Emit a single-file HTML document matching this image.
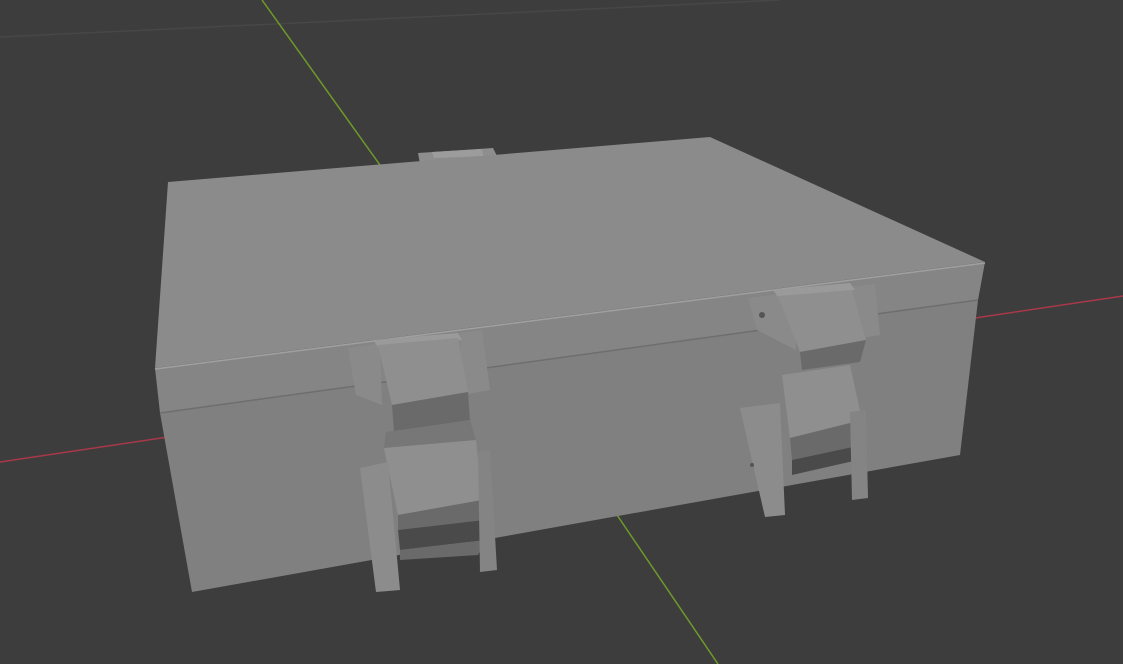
<!DOCTYPE html>
<html><head><meta charset="utf-8"><style>html,body{margin:0;padding:0;background:#3d3d3d;overflow:hidden}svg{display:block}</style></head>
<body>
<svg width="1123" height="664" viewBox="0 0 1123 664" xmlns="http://www.w3.org/2000/svg">
<rect width="1123" height="664" fill="#3d3d3d"/>
<line x1="0" y1="37" x2="780" y2="0" stroke="#474747" stroke-width="1.5"/>
<line x1="262" y1="0" x2="380" y2="165" stroke="#6f9a2a" stroke-width="1.5"/>
<line x1="617" y1="515" x2="718" y2="664" stroke="#6f9a2a" stroke-width="1.5"/>
<line x1="0" y1="462" x2="168" y2="437" stroke="#a8384a" stroke-width="1.5"/>
<line x1="975" y1="318" x2="1123" y2="296" stroke="#a8384a" stroke-width="1.5"/>
<polygon points="418,153 493,148 498,158 420,164" fill="#8e8e8e"/>
<polygon points="432,152 482,149 483,156 434,158" fill="#9c9c9c"/>
<polygon points="160,413 978,300 960,455 192,592" fill="#808080"/>
<polygon points="155,368 985,262 978,300 160,413" fill="#858585"/>
<line x1="160" y1="413" x2="978" y2="300" stroke="#6e6e6e" stroke-width="1.5"/>
<line x1="155" y1="369" x2="985" y2="263" stroke="#a0a0a0" stroke-width="1.5"/>
<polygon points="168,182 710,137 985,262 155,368" fill="#8b8b8b"/>
<!-- left latch -->
<polygon points="348,348 380,343 382,405 356,395" fill="#8a8a8a"/>
<polygon points="460,333 482,330 490,390 462,395" fill="#8a8a8a"/>
<polygon points="373,340 458,333 462,340 378,347" fill="#9a9a9a"/>
<polygon points="378,345 458,338 468,392 392,405" fill="#8f8f8f"/>
<polygon points="392,405 468,392 470,420 394,432" fill="#6a6a6a"/>
<polygon points="386,432 470,420 476,440 384,448" fill="#777"/>
<polygon points="384,448 476,440 482,500 398,515" fill="#8f8f8f"/>
<polygon points="398,515 482,500 484,520 398,530" fill="#6a6a6a"/>
<polygon points="398,530 484,520 486,540 400,550" fill="#4a4a4a"/>
<polygon points="400,550 486,540 478,555 400,560" fill="#6a6a6a"/>
<polygon points="360,468 388,462 400,590 376,592" fill="#8c8c8c"/>
<polygon points="478,452 490,450 497,570 480,572" fill="#848484"/>
<!-- right latch -->
<polygon points="748,298 795,292 796,350 757,330" fill="#8a8a8a"/>
<polygon points="850,287 875,284 880,335 862,338" fill="#8a8a8a"/>
<polygon points="773,290 850,283 855,290 778,297" fill="#9a9a9a"/>
<polygon points="778,296 852,290 866,340 800,352" fill="#8f8f8f"/>
<polygon points="800,352 866,340 860,362 802,370" fill="#6a6a6a"/>
<polygon points="782,375 850,365 862,420 790,438" fill="#8f8f8f"/>
<polygon points="790,438 862,420 862,445 792,460" fill="#6a6a6a"/>
<polygon points="792,460 862,445 858,460 792,475" fill="#4a4a4a"/>
<polygon points="740,408 780,403 785,515 765,517" fill="#8c8c8c"/>
<polygon points="850,412 866,410 868,498 852,500" fill="#848484"/>
<circle cx="762" cy="315" r="3" fill="#555"/>
<circle cx="752" cy="465" r="2" fill="#555"/>
</svg>
</body></html>
